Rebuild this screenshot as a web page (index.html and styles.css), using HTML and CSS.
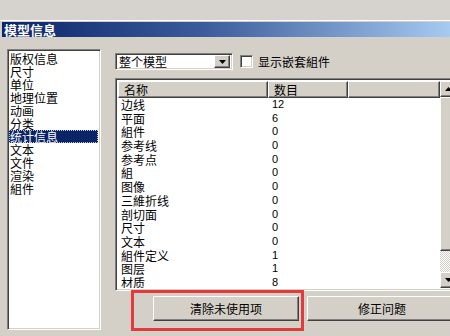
FILE: index.html
```html
<!DOCTYPE html>
<html lang="zh">
<head>
<meta charset="utf-8">
<title>模型信息</title>
<link rel="stylesheet" href="styles.css">
</head>
<body>
<div class="top"></div>
<div class="frame">
  <div class="title">模型信息</div>
  <div class="content">
    <div class="leftlist sunken">
      <div class="item">版权信息</div>
      <div class="item">尺寸</div>
      <div class="item">单位</div>
      <div class="item">地理位置</div>
      <div class="item">动画</div>
      <div class="item">分类</div>
      <div class="item selected">统计信息</div>
      <div class="item">文本</div>
      <div class="item">文件</div>
      <div class="item">渲染</div>
      <div class="item">組件</div>
    </div>
    <div class="right">
      <div class="toolbar">
        <div class="combo sunken">
          <span class="combo-text">整个模型</span>
          <span class="combo-btn raised"><svg width="7" height="4" viewBox="0 0 7 4"><path d="M0 0H7L3.5 4Z" fill="#000"/></svg></span>
        </div>
        <div class="check"><span class="box sunken"></span><span>显示嵌套組件</span></div>
      </div>
      <div class="listview sunken">
        <div class="lv-main">
          <div class="lv-header">
            <div class="hcell c1">名称</div>
            <div class="hcell c2">数目</div>
            <div class="hcell c3"></div>
          </div>
          <div class="lv-body">
            <div class="row"><span class="c1">边线</span><span class="c2 num">12</span></div>
            <div class="row"><span class="c1">平面</span><span class="c2 num">6</span></div>
            <div class="row"><span class="c1">組件</span><span class="c2 num">0</span></div>
            <div class="row"><span class="c1">参考线</span><span class="c2 num">0</span></div>
            <div class="row"><span class="c1">参考点</span><span class="c2 num">0</span></div>
            <div class="row"><span class="c1">組</span><span class="c2 num">0</span></div>
            <div class="row"><span class="c1">图像</span><span class="c2 num">0</span></div>
            <div class="row"><span class="c1">三維折线</span><span class="c2 num">0</span></div>
            <div class="row"><span class="c1">剖切面</span><span class="c2 num">0</span></div>
            <div class="row"><span class="c1">尺寸</span><span class="c2 num">0</span></div>
            <div class="row"><span class="c1">文本</span><span class="c2 num">0</span></div>
            <div class="row"><span class="c1">組件定义</span><span class="c2 num">1</span></div>
            <div class="row"><span class="c1">图层</span><span class="c2 num">1</span></div>
            <div class="row"><span class="c1">材质</span><span class="c2 num">8</span></div>
          </div>
        </div>
        <div class="scrollbar">
          <div class="sb-btn raised"><svg width="7" height="4" viewBox="0 0 7 4"><path d="M0 4H7L3.5 0Z" fill="#000"/></svg></div>
          <div class="sb-thumb raised"></div>
          <div class="sb-track"></div>
          <div class="sb-btn raised"><svg width="7" height="4" viewBox="0 0 7 4"><path d="M0 0H7L3.5 4Z" fill="#000"/></svg></div>
        </div>
      </div>
      <div class="buttons">
        <div class="btn raised b1">清除未使用项</div>
        <div class="btn raised b2">修正问题</div>
      </div>
    </div>
  </div>
</div>
<div class="redbox"></div>
</body>
</html>
```

FILE: styles.css
```css
html, body {
  margin: 0;
  padding: 0;
}
body {
  width: 450px;
  height: 336px;
  overflow: hidden;
  position: relative;
  background: #d4d0c8;
  font-family: "Noto Sans CJK SC", "Noto Sans", sans-serif;
  font-size: 12px;
  color: #000;
}
.top {
  height: 20px;
  background: #d6d3ce;
}
.frame {
  border-top: 1px solid #fff;
  padding-top: 1px;
}
.title {
  margin-left: 2px;
  height: 15px;
  line-height: 15px;
  padding-left: 2px;
  color: #fff;
  font-weight: bold;
  font-size: 13px;
  background: linear-gradient(to right, #0a246a 0%, #3a5c9c 45%, #a6caf0 100%);
}
.sunken {
  border-style: solid;
  border-width: 1px;
  border-color: #808080 #fff #fff #808080;
  box-shadow: inset 1px 1px 0 #404040, inset -1px -1px 0 #d4d0c8;
  background: #fff;
  box-sizing: border-box;
}
.raised {
  border-style: solid;
  border-width: 1px;
  border-color: #fff #404040 #404040 #fff;
  box-shadow: inset -1px -1px 0 #808080;
  background: #d4d0c8;
  box-sizing: border-box;
}
.content {
  display: flex;
  padding: 12px 0 0 7px;
  gap: 14px;
}
.leftlist {
  width: 94px;
  height: 281px;
  padding: 2px 2px 0 1px;
  flex-shrink: 0;
}
.item {
  height: 13px;
  line-height: 13px;
  padding-left: 1px;
  white-space: nowrap;
}
.item.selected {
  background: #0a246a;
  color: #fff;
  outline: 1px dotted #c8c8c8;
  outline-offset: -1px;
}
.right {
  width: 342px;
  flex-shrink: 0;
  padding-top: 4px;
}
.toolbar {
  display: flex;
  align-items: center;
  height: 17px;
}
.combo {
  width: 118px;
  height: 17px;
  display: flex;
  align-items: center;
  padding: 2px;
}
.combo-text {
  flex: 1;
  line-height: 13px;
  padding-left: 1px;
}
.combo-btn {
  width: 16px;
  height: 13px;
  display: flex;
  align-items: center;
  justify-content: center;
}
.check {
  display: flex;
  align-items: center;
  margin-left: 7px;
  gap: 5px;
}
.box {
  width: 13px;
  height: 13px;
}
.listview {
  margin-top: 8px;
  height: 213px;
  display: flex;
  padding: 2px 0 2px 2px;
  width: 344px;
  overflow: hidden;
}
.lv-main {
  width: 322px;
  flex-shrink: 0;
  overflow: hidden;
}
.lv-header {
  display: flex;
  height: 17px;
}
.hcell {
  height: 17px;
  line-height: 15px;
  padding-left: 5px;
  box-sizing: border-box;
  border-style: solid;
  border-width: 1px;
  border-color: #fff #404040 #404040 #fff;
  box-shadow: inset -1px -1px 0 #808080;
  background: #d4d0c8;
}
.hcell.c1 { width: 150px; }
.hcell.c2 { width: 80px; }
.hcell.c3 { width: 92px; }
.row {
  display: flex;
  height: 13.7px;
  line-height: 13.7px;
}
.row .c1 {
  width: 150px;
  padding-left: 3px;
  box-sizing: border-box;
}
.row .c2 {
  padding-left: 4px;
}
.num {
  font-family: "Liberation Sans", Arial, sans-serif;
  font-size: 11px;
}
.scrollbar {
  width: 16px;
  flex-shrink: 0;
  display: flex;
  flex-direction: column;
}
.sb-btn {
  height: 16px;
  display: flex;
  align-items: center;
  justify-content: center;
  flex-shrink: 0;
}
.sb-thumb {
  height: 154px;
  flex-shrink: 0;
}
.sb-track {
  flex: 1;
  background: repeating-conic-gradient(#d4d0c8 0 25%, #fff 0 50%) 0 0 / 2px 2px;
}
.buttons {
  display: flex;
  gap: 8px;
  margin-top: 5px;
  margin-left: 38px;
}
.btn {
  height: 25px;
  line-height: 23px;
  text-align: center;
  flex-shrink: 0;
}
.b1 { width: 146px; }
.b2 { width: 150px; }
.redbox {
  position: absolute;
  left: 131px;
  top: 290px;
  width: 173px;
  height: 41px;
  box-sizing: border-box;
  border: 3px solid #e33b3b;
}
```
